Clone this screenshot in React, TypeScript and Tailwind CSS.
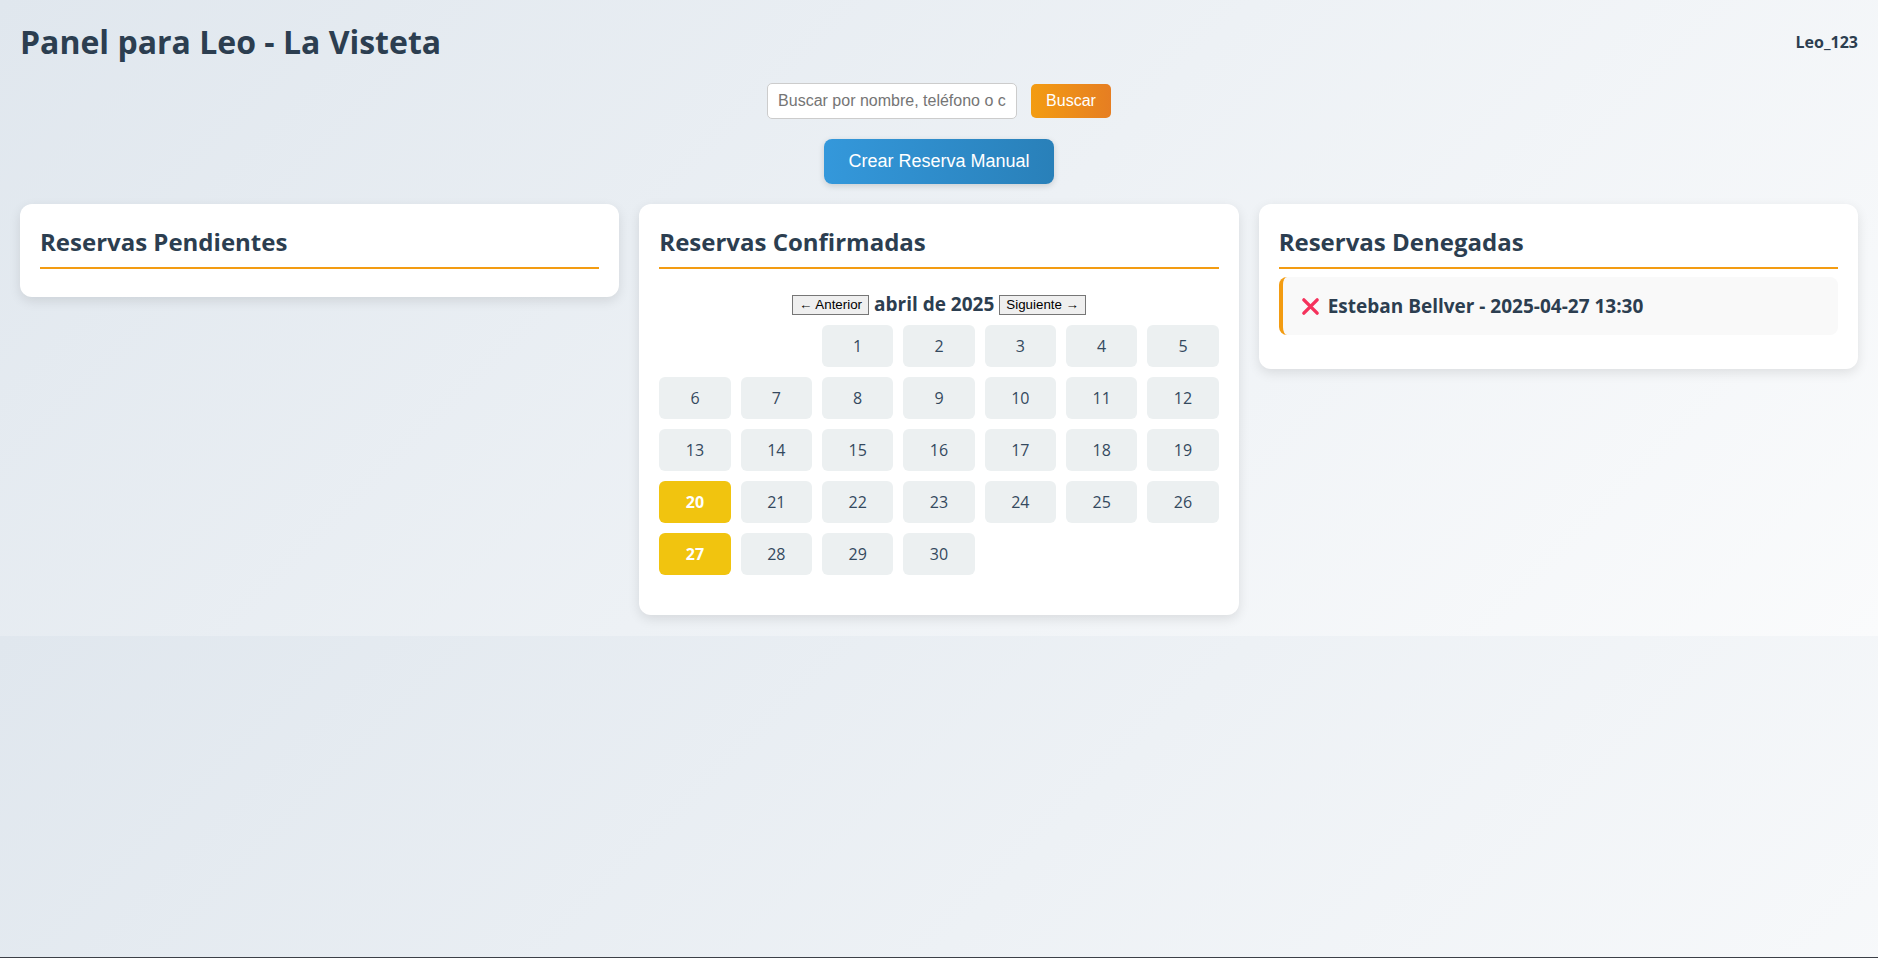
import React from "react";

const days: (number | null)[] = [null, null, ...Array.from({ length: 30 }, (_, i) => i + 1)];
const highlighted = new Set([20, 27]);

function Card({ title, children }: { title: string; children?: React.ReactNode }) {
  return (
    <div className="bg-white rounded-[12px] p-5 shadow-[0_4px_12px_rgba(0,0,0,0.1)]">
      <h2 className="text-[24px] leading-[35px] font-bold text-[#2c3e50] pb-2 mb-2 border-b-2 border-[#f39c12]">
        {title}
      </h2>
      {children}
    </div>
  );
}

export default function App() {
  return (
    <div
      className="min-h-screen border-b border-[#3c4047] bg-[linear-gradient(135deg,#e0e7ee,#fafbfc)] bg-[length:100%_636px] bg-repeat text-[#2c3e50]"
      style={{ fontFamily: '"Open Sans", "Noto Sans", sans-serif' }}
    >
      <div className="p-5">
        <header className="flex items-center justify-between">
          <h1 className="text-[32px] leading-[44px] font-bold text-[#2c3e50]">Panel para Leo - La Visteta</h1>
          <span className="text-[16px] font-bold text-[#2c3e50]">Leo_123</span>
        </header>

        <div
          className="mt-[19px] flex items-center justify-center gap-[14px]"
          style={{ fontFamily: '"Liberation Sans", Arial, sans-serif' }}
        >
          <input
            type="text"
            placeholder="Buscar por nombre, teléfono o código"
            className="w-[250px] h-[36px] px-[10px] border border-[#ccc] rounded-[5px] bg-white text-[16px] placeholder-[#757575] outline-none"
          />
          <button className="h-[34px] px-[15px] rounded-[5px] text-white text-[16px] bg-[linear-gradient(90deg,#f39c12,#e67e22)]">
            Buscar
          </button>
        </div>

        <div className="mt-5 flex justify-center" style={{ fontFamily: '"Liberation Sans", Arial, sans-serif' }}>
          <button className="h-[45px] px-6 rounded-[8px] text-white text-[18px] bg-[linear-gradient(90deg,#3498db,#2980b9)] shadow-[0_2px_6px_rgba(0,0,0,0.15)]">
            Crear Reserva Manual
          </button>
        </div>

        <div className="mt-5 grid grid-cols-3 gap-5 items-start">
          <Card title="Reservas Pendientes" />

          <Card title="Reservas Confirmadas">
            <div className="mt-[22px] h-[27px] flex items-center justify-center gap-[5px]">
              <button
                className="h-[20px] px-[6px] border border-[#767676] bg-[#efefef] text-black text-[13.33px] leading-none"
                style={{ fontFamily: '"Liberation Sans", Arial, sans-serif' }}
              >
                ← Anterior
              </button>
              <span className="text-[19px] font-bold text-[#2c3e50]">abril de 2025</span>
              <button
                className="h-[20px] px-[6px] border border-[#767676] bg-[#efefef] text-black text-[13.33px] leading-none"
                style={{ fontFamily: '"Liberation Sans", Arial, sans-serif' }}
              >
                Siguiente →
              </button>
            </div>
            <div className="mt-[7px] mb-5 grid grid-cols-7 gap-[10px]">
              {days.map((d, i) =>
                d === null ? (
                  <div key={i} className="h-[42px]" />
                ) : (
                  <div
                    key={i}
                    className={
                      highlighted.has(d)
                        ? "h-[42px] rounded-[6px] flex items-center justify-center text-[16px] font-bold text-white bg-[#f1c40f]"
                        : "h-[42px] rounded-[6px] flex items-center justify-center text-[16px] text-[#34495e] bg-[#ecf0f1]"
                    }
                  >
                    {d}
                  </div>
                )
              )}
            </div>
          </Card>

          <Card title="Reservas Denegadas">
            <ul>
              <li className="mt-[1px] mb-[14px] bg-[#f9f9f9] border-l-4 border-[#f39c12] rounded-[8px] py-[15px] pl-[18px] pr-4 flex items-center gap-[8px] text-[19px] leading-[28px] font-bold text-[#2c3e50]">
                <svg width="19" height="19" viewBox="0 0 20 20" aria-hidden="true">
                  <path d="M3 3 L17 17 M17 3 L3 17" stroke="#f5325c" strokeWidth="3.6" strokeLinecap="round" />
                </svg>
                <span>Esteban Bellver - 2025-04-27 13:30</span>
              </li>
            </ul>
          </Card>
        </div>
      </div>
    </div>
  );
}
